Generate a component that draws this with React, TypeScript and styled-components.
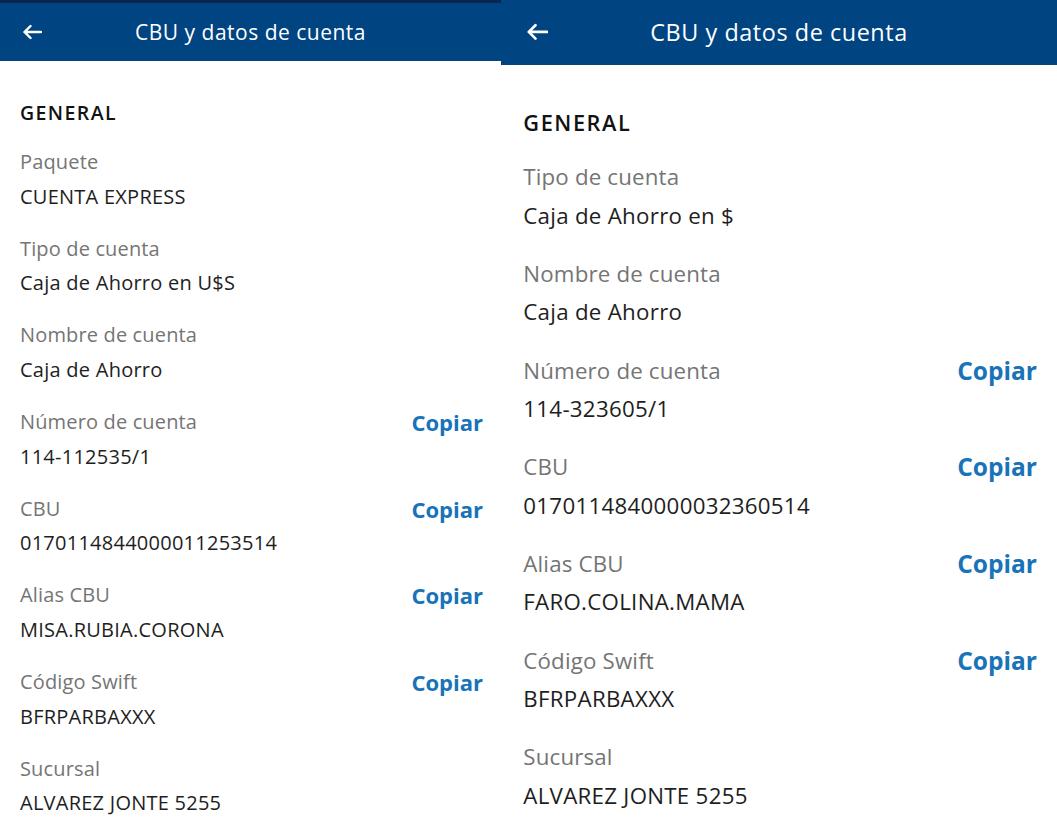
import React from "react";
import styled, { createGlobalStyle } from "styled-components";

const GlobalStyle = createGlobalStyle`
  html, body {
    margin: 0;
    padding: 0;
    background: #ffffff;
  }
  body {
    font-family: "Open Sans", "Liberation Sans", sans-serif;
    -webkit-font-smoothing: antialiased;
  }
  * { box-sizing: border-box; }
`;

const Page = styled.div`
  display: flex;
  width: 1057px;
  height: 833px;
  overflow: hidden;
  background: #ffffff;
`;

const Panel = styled.section<{ $scale: number; $width?: number }>`
  --u: ${(p) => p.$scale}px;
  flex: ${(p) => (p.$width ? `0 0 ${p.$width}px` : "1 1 auto")};
  min-width: 0;
  display: flex;
  flex-direction: column;
  background: #ffffff;
`;

const StatusStrip = styled.div`
  flex: 0 0 3px;
  background: #0a2550;
`;

const Header = styled.header`
  flex: 0 0 calc(58 * var(--u));
  background: #004481;
  display: grid;
  grid-template-columns: 1fr auto 1fr;
  align-items: center;
`;

const BackButton = styled.button`
  justify-self: start;
  margin-left: calc(22 * var(--u));
  width: calc(20 * var(--u));
  height: calc(16 * var(--u));
  padding: 0;
  border: none;
  background: none;
  display: flex;
  align-items: center;
  cursor: pointer;
  svg {
    width: 100%;
    height: 100%;
    display: block;
  }
`;

const Title = styled.h1`
  margin: 0;
  color: #ffffff;
  font-weight: 400;
  font-size: calc(21 * var(--u));
  letter-spacing: calc(0.5 * var(--u));
  white-space: nowrap;
`;

const Content = styled.div`
  flex: 0 0 auto;
  padding: calc(35 * var(--u)) calc(18 * var(--u)) 0 calc(20 * var(--u));
  display: flex;
  flex-direction: column;
`;

const SectionTitle = styled.h2`
  margin: 0 0 calc(15 * var(--u));
  color: #121212;
  font-size: calc(19.5 * var(--u));
  font-weight: 600;
  letter-spacing: calc(1.4 * var(--u));
  line-height: calc(34 * var(--u));
`;

const Field = styled.div`
  display: grid;
  grid-template-columns: 1fr auto;
  grid-auto-rows: calc(34.5 * var(--u));
  margin-bottom: calc(17.7 * var(--u));
  align-items: center;
`;

const Label = styled.span`
  grid-column: 1;
  grid-row: 1;
  color: #757575;
  font-size: calc(20 * var(--u));
  font-weight: 400;
  letter-spacing: calc(0.15 * var(--u));
  line-height: calc(34.5 * var(--u));
  white-space: nowrap;
`;

const Value = styled.span`
  grid-column: 1 / span 2;
  grid-row: 2;
  color: #1e1e1e;
  font-size: calc(20 * var(--u));
  font-weight: 400;
  letter-spacing: calc(0.25 * var(--u));
  line-height: calc(34.5 * var(--u));
  white-space: nowrap;
`;

const CopyButton = styled.button`
  grid-column: 2;
  grid-row: 1;
  padding: 0;
  border: none;
  background: none;
  color: #1973b8;
  font-family: inherit;
  font-size: calc(22 * var(--u));
  font-weight: 700;
  line-height: calc(34.5 * var(--u));
  cursor: pointer;
`;

type Item = { label: string; value: string; copy?: boolean };

const leftItems: Item[] = [
  { label: "Paquete", value: "CUENTA EXPRESS" },
  { label: "Tipo de cuenta", value: "Caja de Ahorro en U$S" },
  { label: "Nombre de cuenta", value: "Caja de Ahorro" },
  { label: "Número de cuenta", value: "114-112535/1", copy: true },
  { label: "CBU", value: "0170114844000011253514", copy: true },
  { label: "Alias CBU", value: "MISA.RUBIA.CORONA", copy: true },
  { label: "Código Swift", value: "BFRPARBAXXX", copy: true },
  { label: "Sucursal", value: "ALVAREZ JONTE 5255" },
];

const rightItems: Item[] = [
  { label: "Tipo de cuenta", value: "Caja de Ahorro en $" },
  { label: "Nombre de cuenta", value: "Caja de Ahorro" },
  { label: "Número de cuenta", value: "114-323605/1", copy: true },
  { label: "CBU", value: "0170114840000032360514", copy: true },
  { label: "Alias CBU", value: "FARO.COLINA.MAMA", copy: true },
  { label: "Código Swift", value: "BFRPARBAXXX", copy: true },
  { label: "Sucursal", value: "ALVAREZ JONTE 5255" },
];

const BackArrow = () => (
  <svg viewBox="0 0 20 16" fill="none" aria-hidden="true">
    <path
      d="M19 8H2.5M8.5 2L2.5 8l6 6"
      stroke="#ffffff"
      strokeWidth="2.4"
      strokeLinecap="round"
      strokeLinejoin="round"
    />
  </svg>
);

const AccountScreen = ({
  items,
  scale,
  width,
  strip,
}: {
  items: Item[];
  scale: number;
  width?: number;
  strip?: boolean;
}) => (
  <Panel $scale={scale} $width={width}>
    {strip && <StatusStrip />}
    <Header>
      <BackButton aria-label="Volver">
        <BackArrow />
      </BackButton>
      <Title>CBU y datos de cuenta</Title>
    </Header>
    <Content>
      <SectionTitle>GENERAL</SectionTitle>
      {items.map((it) => (
        <Field key={it.label}>
          <Label>{it.label}</Label>
          {it.copy && <CopyButton>Copiar</CopyButton>}
          <Value>{it.value}</Value>
        </Field>
      ))}
    </Content>
  </Panel>
);

export default function App() {
  return (
    <>
      <GlobalStyle />
      <Page>
        <AccountScreen items={leftItems} scale={1} width={501} strip />
        <AccountScreen items={rightItems} scale={1.115} />
      </Page>
    </>
  );
}
